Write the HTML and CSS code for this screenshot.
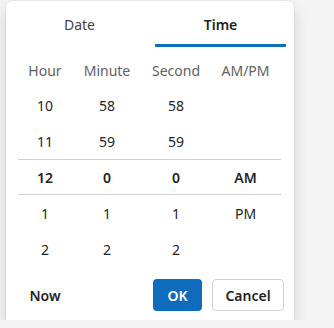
FILE: index.html
```
<!DOCTYPE html>
<html lang="en">
<head>
    <meta charset="UTF-8">
    <meta name="viewport" content="width=device-width, initial-scale=1.0">
    <title>Time Picker</title>
    <link rel="stylesheet" href="styles.css">
</head>
<body>
    <div class="picker">
        <div class="tabs">
            <button class="tab">Date</button>
            <button class="tab active">Time</button>
        </div>

        <div class="grid head">
            <span>Hour</span>
            <span>Minute</span>
            <span>Second</span>
            <span>AM/PM</span>
        </div>

        <div class="grid row">
            <span>10</span><span>58</span><span>58</span><span></span>
        </div>
        <div class="grid row">
            <span>11</span><span>59</span><span>59</span><span></span>
        </div>
        <div class="grid row selected">
            <span>12</span><span>0</span><span>0</span><span>AM</span>
        </div>
        <div class="grid row">
            <span>1</span><span>1</span><span>1</span><span>PM</span>
        </div>
        <div class="grid row">
            <span>2</span><span>2</span><span>2</span><span></span>
        </div>

        <div class="footer">
            <button class="btn btn-now">Now</button>
            <div class="actions">
                <button class="btn btn-ok">OK</button>
                <button class="btn btn-cancel">Cancel</button>
            </div>
        </div>
    </div>
</body>
</html>
```

FILE: styles.css
```
* {
    margin: 0;
    padding: 0;
    box-sizing: border-box;
}

body {
    font-family: "Noto Sans", "Open Sans", sans-serif;
    font-size: 14px;
    color: #242424;
    background: #f4f4f4;
    overflow: hidden;
}

.picker {
    margin: 1px 0 0 6px;
    width: 288px;
    height: 319px;
    background: #fff;
    border-radius: 6px 6px 0 0;
    box-shadow: 0 0 2px rgba(0,0,0,0.12), 0 8px 16px rgba(0,0,0,0.14);
}

button {
    font-family: inherit;
    font-size: 14px;
    background: none;
    border: none;
    cursor: pointer;
}

.tabs {
    display: flex;
    gap: 10px;
    padding: 0 8px;
}

.tab {
    flex: 1;
    padding: 14px 0 9px;
    line-height: 20px;
    color: #424242;
    border-bottom: 3px solid transparent;
}

.tab.active {
    font-weight: 600;
    color: #242424;
    border-bottom-color: #0f6cbd;
    border-radius: 0 0 1px 1px;
}

.grid {
    display: grid;
    grid-template-columns: 54px 70px 68px 71px;
    margin: 0 13px 0 12px;
    text-align: center;
    align-items: center;
}

.head {
    margin-top: 6px;
    height: 34px;
    color: #616161;
}

.row {
    height: 36px;
}

.row.selected {
    font-weight: 600;
    border-top: 1px solid #d1d1d1;
    border-bottom: 1px solid #d1d1d1;
}

.footer {
    display: flex;
    justify-content: space-between;
    align-items: center;
    margin-top: 12px;
    padding: 0 10px 0 8px;
}

.actions {
    display: flex;
    gap: 10px;
}

.btn {
    height: 32px;
    border-radius: 4px;
    font-weight: 600;
    color: #242424;
}

.btn-now {
    width: 62px;
}

.btn-ok {
    width: 49px;
    background: #0f6cbd;
    color: #fff;
}

.btn-cancel {
    width: 72px;
    border: 1px solid #d1d1d1;
    background: #fff;
}
```
